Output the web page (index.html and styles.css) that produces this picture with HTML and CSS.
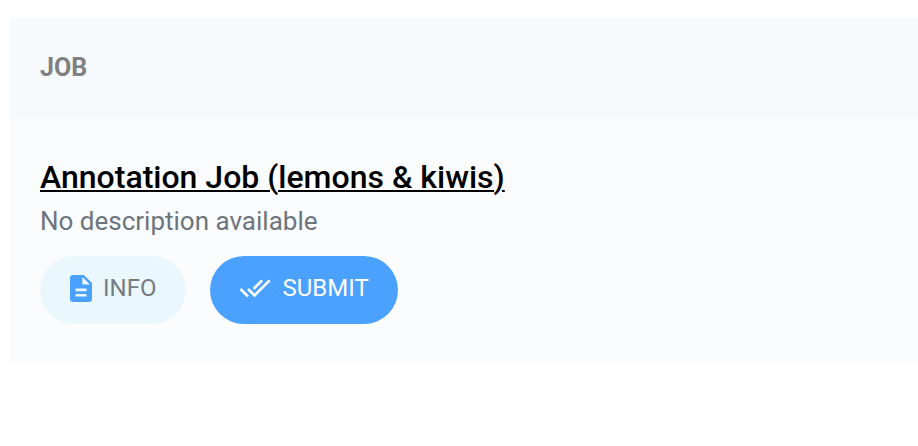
FILE: index.html
```html
<!DOCTYPE html>
<html lang="en">
<head>
<meta charset="utf-8">
<title>Jobs</title>
<link rel="stylesheet" href="styles.css">
</head>
<body>
<main class="table">
  <header class="table-head">JOB</header>
  <section class="job">
    <a class="job-title">Annotation Job (lemons &amp; kiwis)</a>
    <p class="job-desc">No description available</p>
    <div class="actions">
      <button class="btn btn-info"><svg class="icon-doc" viewBox="4 2 16 20" preserveAspectRatio="none"><path d="M14 2H6c-1.100 0-2 .9-2 2v16c0 1.100.9 2 2 2h12c1.100 0 2-.9 2-2V8l-6-6zm2 16H8v-2h8v2zm0-4H8v-2h8v2zm-3-5V3.500L18.500 9H13z"/></svg><span>INFO</span></button>
      <button class="btn btn-submit"><svg class="icon-check" viewBox="0 0 24 24"><path d="M18 7l-1.410-1.410-6.340 6.340 1.410 1.410L18 7zm4.240-1.410L11.660 16.170 7.480 12l-1.410 1.410L11.660 19l12-12-1.420-1.410zM.41 13.410L6 19l1.410-1.410L1.830 12 .41 13.410z"/></svg><span>SUBMIT</span></button>
    </div>
  </section>
</main>
</body>
</html>
```
FILE: styles.css
```css
* { box-sizing: border-box; }
body { margin: 0; background: #fff; font-family: Roboto, sans-serif; overflow: hidden; }
.table { margin: 18px 0 0 10px; }
.table-head { height: 100px; padding-left: 30px; padding-bottom: 1px; display: flex; align-items: center; background: #f6fafd; color: #808080; font-size: 25px; font-weight: 700; }
.job { height: 246px; padding: 39px 30px 0; background: #fbfcfe; }
.job-title { display: block; font-size: 32px; line-height: 40px; font-weight: 500; color: #000; text-decoration: underline; text-decoration-thickness: 2px; text-underline-offset: 2px; }
.job-desc { margin: 4px 0 0; font-size: 26px; line-height: 40px; color: #6c757d; }
.actions { display: flex; gap: 24px; margin-top: 15px; }
.btn { display: flex; align-items: center; height: 68px; padding: 0; border: 0; border-radius: 34px; font: 400 24px/32px Roboto, sans-serif; }
.btn svg { fill: currentColor; flex: none; }
.btn span { margin-top: -4px; }
.btn-info { width: 146px; padding-left: 30px; gap: 11px; background: #eaf8fe; color: #777c80; }
.btn-submit { width: 188px; padding-left: 29px; gap: 11.5px; background: #4aa1ff; color: #fff; }
.icon-doc { width: 22px; height: 27px; color: #4aa1ff; margin-top: -4px; }
.icon-check { width: 32px; height: 32px; margin-top: -4px; }
```
